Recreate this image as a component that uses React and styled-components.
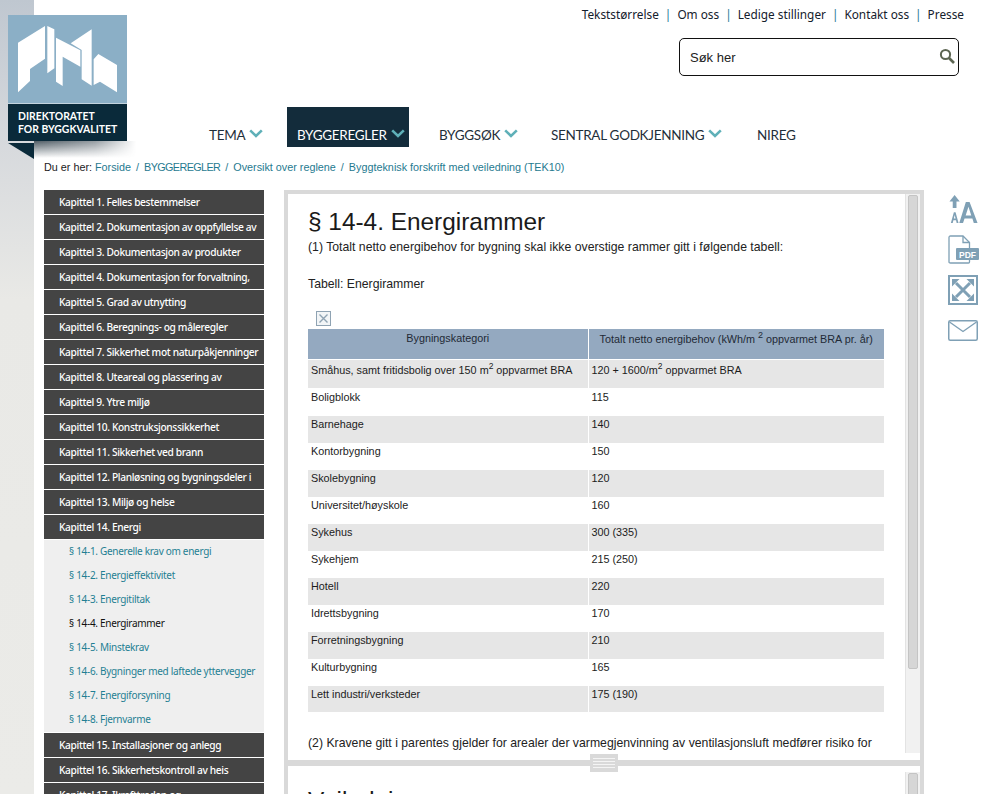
import React from "react";
import styled, { createGlobalStyle } from "styled-components";

const Global = createGlobalStyle`
  html, body { margin: 0; padding: 0; background: #fff; }
  body { font-family: "Liberation Sans", Arial, sans-serif; color: #1a1a1a; }
  * { box-sizing: border-box; }
`;

const Page = styled.div`
  position: relative;
  display: flex;
  width: 995px;
  height: 794px;
  overflow: hidden;
`;
const Rail = styled.div`
  width: 34px;
  flex: none;
  background: linear-gradient(180deg, #bfc7d0 0, #d5d8dc 130px, #e9e9e6 300px, #ebebe8 100%);
`;
const Main = styled.div`
  flex: 1;
  min-width: 0;
  display: flex;
  flex-direction: column;
`;

/* Logo sits over the rail and the header */
const Logo = styled.a`
  position: absolute;
  left: 8px;
  top: 15px;
  width: 119px;
  display: block;
`;
const LogoArt = styled.div`
  height: 88px;
  background: #8bafc6;
  svg { display: block; }
`;
const LogoBand = styled.div`
  height: 38px;
  border-top: 1px solid #c3d4df;
  background: #0a2a3a;
  color: #fff;
  font: 700 10.4px/13px "Lato", "Noto Sans", sans-serif;
  padding: 6px 0 0 10px;
  white-space: nowrap;
`;
const LogoFold = styled.svg`
  display: block;
`;
const LogoShadow = styled.div`
  position: absolute;
  left: 34px;
  top: 141px;
  width: 102px;
  height: 17px;
  background: linear-gradient(180deg, rgba(50,65,75,.85), rgba(255,255,255,0) 100%);
  -webkit-mask-image: linear-gradient(90deg, #000 0, rgba(0,0,0,.6) 60%, transparent 100%);
  mask-image: linear-gradient(90deg, #000 0, rgba(0,0,0,.6) 60%, transparent 100%);
`;

const Header = styled.header`
  height: 107px;
  display: flex;
  flex-direction: column;
  align-items: flex-end;
  padding: 7px 31px 0 0;
`;
const TopLinks = styled.nav`
  display: flex;
  align-items: center;
  height: 15px;
  font: 400 11.8px/15px "Noto Sans", sans-serif;
  color: #14202c;
`;
const TopLink = styled.a`
  white-space: nowrap;
`;
const Sep = styled.span`
  color: #2a7a96;
  margin: 0 6px;
`;
const SearchBox = styled.div`
  width: 280px;
  height: 38px;
  margin: 16px 5px 0 0;
  border: 1px solid #111;
  border-radius: 5px;
  display: flex;
  align-items: center;
  justify-content: space-between;
  padding: 0 3px 0 10px;
  font-size: 13px;
  color: #222;
  svg { margin-top: -2px; }
`;

const NavBar = styled.nav`
  height: 40px;
  display: flex;
  padding-left: 175px;
`;
const NavItem = styled.a`
  display: flex;
  align-items: flex-start;
  gap: ${p => (p.$chev ? "4px" : "0")};
  height: 40px;
  padding: 20px 0 0 ${p => p.$left}px;
  width: ${p => p.$w}px;
  background: ${p => (p.$active ? "#132c3b" : "transparent")};
  color: ${p => (p.$active ? "#fff" : "#1f2f3a")};
  font: 400 13.5px/16px "Lato", "Noto Sans", sans-serif;
  letter-spacing: -0.3px;
  white-space: nowrap;
  svg { margin-top: 2px; flex: none; }
`;

const Crumbs = styled.div`
  height: 43px;
  padding: 13px 0 0 10px;
  font-size: 10.8px;
  line-height: 14px;
  color: #1b1b1b;
`;
const CrumbLink = styled.a`
  color: #1f7a90;
  letter-spacing: ${p => (p.$tight ? "-0.6px" : "0")};
`;
const Slash = styled.span`
  color: #1f7a90;
  margin: 0 5px;
`;

const Body = styled.div`
  flex: 1;
  min-height: 0;
  display: flex;
  padding-left: 10px;
`;
const Side = styled.ul`
  list-style: none;
  margin: 0 20px 0 0;
  padding: 0;
  width: 220px;
  flex: none;
  display: flex;
  flex-direction: column;
  gap: 1px;
`;
const Chapter = styled.li`
  height: 24px;
  flex: none;
  background: #444444;
  color: #fff;
  font: 500 10.2px/24px "Noto Sans", sans-serif;
  letter-spacing: -0.35px;
  padding-left: 15px;
  white-space: nowrap;
`;
const SubPanel = styled.ul`
  list-style: none;
  margin: 0;
  padding: 0;
  flex: none;
  background: #efefef;
`;
const SubItem = styled.li`
  height: 24px;
  padding-left: 25px;
  font: 400 10px/23px "Noto Sans", sans-serif;
  letter-spacing: -0.3px;
  color: ${p => (p.$current ? "#111" : "#1f7f93")};
  white-space: nowrap;
`;

const Reader = styled.div`
  position: relative;
  width: 640px;
  flex: none;
  background: #d9d9d9;
  padding: 4px 4px 0;
  display: flex;
  flex-direction: column;
  gap: 6px;
`;
const Pane = styled.section`
  flex: ${p => (p.$grow ? "1" : "none")};
  height: ${p => (p.$grow ? "auto" : "566px")};
  background: #fff;
  display: flex;
  overflow: hidden;
  min-height: 0;
`;
const PaneText = styled.div`
  flex: 1;
  min-width: 0;
  padding: ${p => p.$top}px 16px 0 20px;
`;
const Scrollbar = styled.div`
  width: 15px;
  flex: none;
  margin: ${p => p.$mt}px 0 ${p => p.$mb}px;
  background: #f1f1f1;
  border-left: 1px solid #e3e3e3;
  padding: 1px 2px 0 2px;
`;
const Thumb = styled.div`
  height: ${p => p.$h}px;
  background: #d6d6d6;
  border: 1px solid #c4c4c4;
  border-radius: 2px;
`;
const Handle = styled.div`
  position: absolute;
  left: 306px;
  top: 564px;
  width: 28px;
  height: 18px;
  background: #d9d9d9;
  display: flex;
  flex-direction: column;
  justify-content: center;
  gap: 2px;
  padding: 0 3px;
`;
const HandleLine = styled.i`
  display: block;
  height: 1px;
  background: #f4f4f4;
`;
const Heading = styled.h1`
  margin: 0;
  font: 400 24.4px/30px "Liberation Sans", sans-serif;
  color: #1a1a1a;
`;
const Para = styled.p`
  margin: ${p => p.$mt}px 0 0;
  font-size: 12.25px;
  line-height: 14px;
  color: #222;
  white-space: nowrap;
`;
const BrokenImg = styled.div`
  width: 15px;
  height: 15px;
  margin: 20px 0 3px 8px;
  svg { display: block; }
`;
const Table = styled.table`
  width: 576px;
  border-collapse: collapse;
  table-layout: fixed;
`;
const Th = styled.th`
  width: ${p => p.$w}px;
  height: 30px;
  padding: ${p => p.$pt}px 0 0;
  background: #94a9c0;
  font: 400 10.8px/13px "Liberation Sans", sans-serif;
  color: #1f2a36;
  text-align: center;
  vertical-align: top;
  border-left: ${p => (p.$second ? "1px solid #fff" : "0")};
  border-bottom: 1px solid #fff;
  sup { font-size: 9px; line-height: 0; }
`;
const Tr = styled.tr`
  background: ${p => (p.$alt ? "#e6e6e6" : "#fff")};
`;
const Td = styled.td`
  height: ${p => p.$h}px;
  padding: ${p => p.$pt}px 0 0 3px;
  font-size: 10.8px;
  line-height: 13px;
  color: #1c1c1c;
  vertical-align: top;
  white-space: nowrap;
  border-left: ${p => (p.$second ? "1px solid #fff" : "0")};
  sup { font-size: 8.5px; line-height: 0; }
`;

const Tools = styled.aside`
  flex: none;
  display: flex;
  flex-direction: column;
  align-items: flex-start;
  padding: 5px 0 0 24px;
  svg { display: block; }
`;
const ToolBtn = styled.a`
  display: block;
  margin-bottom: ${p => p.$mb}px;
`;

const chapters = [
  "Kapittel 1. Felles bestemmelser",
  "Kapittel 2. Dokumentasjon av oppfyllelse av",
  "Kapittel 3. Dokumentasjon av produkter",
  "Kapittel 4. Dokumentasjon for forvaltning,",
  "Kapittel 5. Grad av utnytting",
  "Kapittel 6. Beregnings- og måleregler",
  "Kapittel 7. Sikkerhet mot naturpåkjenninger",
  "Kapittel 8. Uteareal og plassering av",
  "Kapittel 9. Ytre miljø",
  "Kapittel 10. Konstruksjonssikkerhet",
  "Kapittel 11. Sikkerhet ved brann",
  "Kapittel 12. Planløsning og bygningsdeler i",
  "Kapittel 13. Miljø og helse",
  "Kapittel 14. Energi",
];
const subs = [
  "§ 14-1. Generelle krav om energi",
  "§ 14-2. Energieffektivitet",
  "§ 14-3. Energitiltak",
  "§ 14-4. Energirammer",
  "§ 14-5. Minstekrav",
  "§ 14-6. Bygninger med laftede yttervegger",
  "§ 14-7. Energiforsyning",
  "§ 14-8. Fjernvarme",
];
const after = [
  "Kapittel 15. Installasjoner og anlegg",
  "Kapittel 16. Sikkerhetskontroll av heis",
  "Kapittel 17. Ikrafttreden og",
];
const rows = [
  ["Boligblokk", "115", 28, 3],
  ["Barnehage", "140", 27, 2],
  ["Kontorbygning", "150", 27, 2],
  ["Skolebygning", "120", 27, 2],
  ["Universitet/høyskole", "160", 27, 2],
  ["Sykehus", "300 (335)", 27, 2],
  ["Sykehjem", "215 (250)", 27, 2],
  ["Hotell", "220", 27, 2],
  ["Idrettsbygning", "170", 27, 2],
  ["Forretningsbygning", "210", 27, 2],
  ["Kulturbygning", "165", 27, 2],
  ["Lett industri/verksteder", "175 (190)", 26, 2],
];

const Chev = ({ w = 14 }) => (
  <svg width={w} height="9" viewBox="0 0 14 9" fill="none">
    <path d="M1.2 1.4 L7 7 L12.8 1.4" stroke="#5fb0b8" strokeWidth="2.6" />
  </svg>
);

const LogoMark = () => (
  <svg width="119" height="88" viewBox="24 45 357 264">
    <g fill="#fff">
      <path d="M54 128 L135 78 V176 L90 207 V243 L54 277Z" />
      <path d="M142 78 L163 88 V205 L142 220Z" />
      <path d="M168 113 L241 151 V200 L188 170 V258 L168 245Z" />
      <path d="M212 130 L275 88 V257 L245 238 V150Z" />
      <path d="M295 162 L351 195 V277 L300 245 L281 255 V178Z" />
    </g>
  </svg>
);

export default function App() {
  return (
    <Page>
      <Global />
      <Rail />
      <Main>
        <Header>
          <TopLinks>
            <TopLink>Tekststørrelse</TopLink><Sep>|</Sep>
            <TopLink>Om oss</TopLink><Sep>|</Sep>
            <TopLink>Ledige stillinger</TopLink><Sep>|</Sep>
            <TopLink>Kontakt oss</TopLink><Sep>|</Sep>
            <TopLink>Presse</TopLink>
          </TopLinks>
          <SearchBox>
            <span>Søk her</span>
            <svg width="16" height="16" viewBox="0 0 16 16" fill="none">
              <circle cx="6.5" cy="6.5" r="4.6" stroke="#5c6552" strokeWidth="2" />
              <path d="M10 10 L15 15" stroke="#5c6552" strokeWidth="2.6" />
            </svg>
          </SearchBox>
        </Header>
        <NavBar>
          <NavItem $w={78} $left={0} $chev>TEMA <Chev /></NavItem>
          <NavItem $w={122} $left={10} $active $chev>BYGGEREGLER <Chev /></NavItem>
          <NavItem $w={142} $left={30} $chev>BYGGSØK <Chev /></NavItem>
          <NavItem $w={206} $left={0} $chev>SENTRAL GODKJENNING <Chev /></NavItem>
          <NavItem $w={60} $left={0}>NIREG</NavItem>
        </NavBar>
        <Crumbs>
          Du er her: <CrumbLink>Forside</CrumbLink><Slash>/</Slash><CrumbLink $tight>BYGGEREGLER</CrumbLink><Slash>/</Slash><CrumbLink>Oversikt over reglene</CrumbLink><Slash>/</Slash><CrumbLink>Byggteknisk forskrift med veiledning (TEK10)</CrumbLink>
        </Crumbs>
        <Body>
          <Side>
            {chapters.map(c => <Chapter key={c}>{c}</Chapter>)}
            <SubPanel>
              {subs.map((s, i) => <SubItem key={s} $current={i === 3}>{s}</SubItem>)}
            </SubPanel>
            {after.map(c => <Chapter key={c}>{c}</Chapter>)}
          </Side>
          <Reader>
            <Pane>
              <PaneText $top={13}>
                <Heading>§ 14-4. Energirammer</Heading>
                <Para $mt={3}>(1) Totalt netto energibehov for bygning skal ikke overstige rammer gitt i følgende tabell:</Para>
                <Para $mt={23}>Tabell: Energirammer</Para>
                <BrokenImg>
                  <svg width="15" height="15" viewBox="0 0 15 15" fill="none">
                    <rect x="0.5" y="0.5" width="14" height="14" fill="#f2f5f7" stroke="#8fa3b3" />
                    <path d="M3.5 3.5 L11.5 11.5 M11.5 3.5 L3.5 11.5" stroke="#8fa3b3" strokeWidth="1.4" />
                  </svg>
                </BrokenImg>
                <Table>
                  <thead>
                    <tr>
                      <Th $w={280} $pt={3}>Bygningskategori</Th>
                      <Th $w={296} $pt={4} $second>Totalt netto energibehov (kWh/m <sup>2</sup> oppvarmet BRA pr. år)</Th>
                    </tr>
                  </thead>
                  <tbody>
                    <Tr $alt>
                      <Td $h={29} $pt={4}>Småhus, samt fritidsbolig over 150 m<sup>2</sup> oppvarmet BRA</Td>
                      <Td $h={29} $pt={4} $second>120 + 1600/m<sup>2</sup> oppvarmet BRA</Td>
                    </Tr>
                    {rows.map((r, i) => (
                      <Tr key={r[0]} $alt={i % 2 === 1}>
                        <Td $h={r[2]} $pt={r[3]}>{r[0]}</Td>
                        <Td $h={r[2]} $pt={r[3]} $second>{r[1]}</Td>
                      </Tr>
                    ))}
                  </tbody>
                </Table>
                <Para $mt={24}>(2) Kravene gitt i parentes gjelder for arealer der varmegjenvinning av ventilasjonsluft medfører risiko for</Para>
              </PaneText>
              <Scrollbar $mt={0} $mb={7}><Thumb $h={474} /></Scrollbar>
            </Pane>
            <Pane $grow>
              <PaneText $top={20}>
                <Heading>Veiledning</Heading>
              </PaneText>
              <Scrollbar $mt={6} $mb={0}><Thumb $h={60} /></Scrollbar>
            </Pane>
            <Handle>
              <HandleLine /><HandleLine /><HandleLine /><HandleLine />
            </Handle>
          </Reader>
          <Tools>
            <ToolBtn $mb={11}>
              <svg width="31" height="29" viewBox="0 0 31 31" fill="#7fa0b5">
                <path d="M6 0 L11.5 7 H8 V14 H4 V7 H0.5Z" />
                <path d="M2 30 L5.2 18.5 H7 L10.2 30 H8.2 L7.5 27 H4.7 L4 30Z M5.2 25 H7 L6.1 21.5Z" />
                <path d="M11 30 L18 7.5 H22 L30.5 30 H26.5 L25 25.2 H16.6 L15 30Z M17.8 21.8 H23.8 L20.8 12.5Z" />
              </svg>
            </ToolBtn>
            <ToolBtn $mb={11}>
              <svg width="31" height="29" viewBox="0 0 31 29" fill="none">
                <path d="M2.5 1 H15 L21.5 7.5 V27 Q21.5 28 20.5 28 H2.5 Q1 28 1 27 V2.5 Q1 1 2.5 1Z" stroke="#7fa0b5" strokeWidth="1.3" fill="#fff" />
                <path d="M15 1 V7.5 H21.5" stroke="#7fa0b5" strokeWidth="1.3" />
                <rect x="8" y="13" width="23" height="12" rx="1" fill="#7fa0b5" />
                <text x="19.5" y="22.5" textAnchor="middle" fontFamily="Liberation Sans" fontWeight="700" fontSize="8.5" fill="#fff">PDF</text>
              </svg>
            </ToolBtn>
            <ToolBtn $mb={15}>
              <svg width="30" height="30" viewBox="0 0 30 30" fill="none">
                <rect x="1" y="1" width="28" height="28" stroke="#7fa0b5" strokeWidth="2" />
                <path d="M8 8 L22 22 M22 8 L8 22" stroke="#7fa0b5" strokeWidth="3" />
                <path d="M4 4 H11.5 L4 11.5Z M26 4 H18.5 L26 11.5Z M4 26 H11.5 L4 18.5Z M26 26 H18.5 L26 18.5Z" fill="#7fa0b5" />
              </svg>
            </ToolBtn>
            <ToolBtn $mb={0}>
              <svg width="30" height="21" viewBox="0 0 30 21" fill="none">
                <rect x="0.75" y="0.75" width="28.5" height="19.5" rx="1.5" stroke="#7fa0b5" strokeWidth="1.5" />
                <path d="M1.5 2 L15 11.5 L28.5 2" stroke="#7fa0b5" strokeWidth="1.4" />
              </svg>
            </ToolBtn>
          </Tools>
        </Body>
      </Main>
      <LogoShadow />
      <Logo>
        <LogoArt><LogoMark /></LogoArt>
        <LogoBand>DIREKTORATET<br />FOR BYGGKVALITET</LogoBand>
        <LogoFold width="26" height="18" viewBox="0 0 26 18">
          <path d="M0 2 H26 V18Z" fill="#0a2a3a" />
        </LogoFold>
      </Logo>
    </Page>
  );
}
